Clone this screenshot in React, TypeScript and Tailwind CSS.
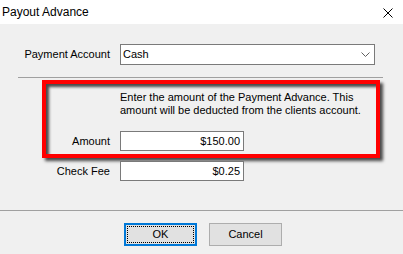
import React from "react";

export default function App() {
  const font = { fontFamily: '"Liberation Sans", Arial, sans-serif' };
  return (
    <div className="w-[403px] h-[254px] overflow-hidden bg-[#f0f0f0] text-black text-[11px] leading-[13px]" style={font}>
      <div className="h-6 bg-white flex items-center justify-between pl-[2px] pr-[10px]">
        <span className="text-[12px] leading-none text-black pb-[1px]">Payout Advance</span>
        <svg width="10" height="10" viewBox="0 0 10 10" className="mt-[1px]">
          <path d="M0.5 0.5 L9.5 9.5 M9.5 0.5 L0.5 9.5" stroke="#000" strokeWidth="1" fill="none" />
        </svg>
      </div>
      <div className="pt-5">
        <div className="flex items-center">
          <div className="w-[110px] text-right">Payment Account</div>
          <div className="ml-[10px] w-[255px] h-[21px] bg-white border border-[#7a7a7a] flex items-center justify-between pl-[2px] pr-[4px]">
            <span>Cash</span>
            <svg width="9" height="5" viewBox="0 0 9 5">
              <path d="M0.5 0.5 L4.5 4.5 L8.5 0.5" stroke="#606060" strokeWidth="1" fill="none" />
            </svg>
          </div>
        </div>
        <div className="mt-3 ml-[18px] w-[365px] h-px bg-[#a0a0a0]" />
        <div className="mt-[2px] ml-[42px] w-[338px] h-[78px] border-4 border-[#ff0000] shadow-[3px_3px_3px_rgba(0,0,0,0.7),inset_3px_3px_3px_rgba(0,0,0,0.7)]">
          <p className="pl-[74px] pt-[7px]">
            Enter the amount of the Payment Advance. This
            <br />
            amount will be deducted from the clients account.
          </p>
          <div className="mt-[14px] flex items-center">
            <div className="w-[64px] text-right">Amount</div>
            <div className="ml-[10px] w-[124px] h-[20px] bg-white border border-[#7a7a7a] flex items-center justify-end pr-[3px]">
              $150.00
            </div>
          </div>
        </div>
        <div className="mt-[3px] flex items-center">
          <div className="w-[110px] text-right">Check Fee</div>
          <div className="ml-[10px] w-[124px] h-[20px] bg-white border border-[#7a7a7a] flex items-center justify-end pr-[3px]">
            $0.25
          </div>
        </div>
        <div className="mt-[29px] ml-0 w-[403px] h-px bg-[#a0a0a0]" />
        <div className="mt-3 ml-[124px] flex gap-3">
          <div className="w-[73px] h-[23px] bg-[#e1e1e1] border-2 border-[#0078d7] p-px">
            <div className="w-full h-full border border-dotted border-black flex items-center justify-center">
              OK
            </div>
          </div>
          <div className="w-[73px] h-[23px] bg-[#e1e1e1] border border-[#adadad] flex items-center justify-center">
            Cancel
          </div>
        </div>
      </div>
    </div>
  );
}
